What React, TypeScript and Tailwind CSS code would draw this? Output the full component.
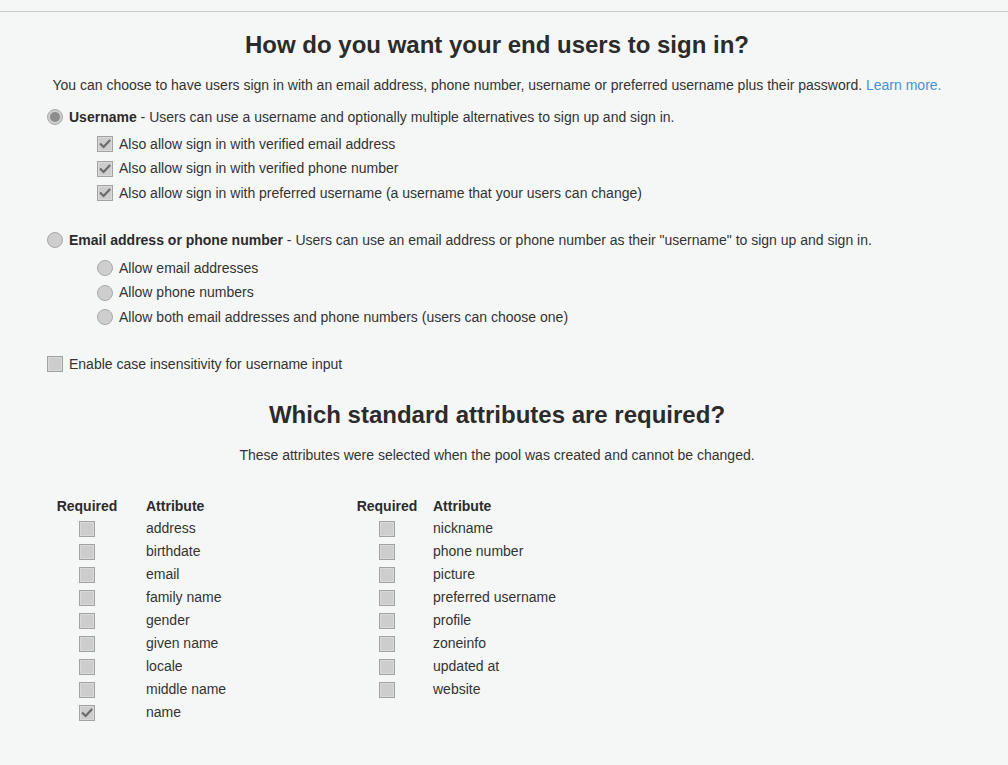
import React from "react";

const Check = () => (
  <svg width="12" height="12" viewBox="0 0 12 12" className="block">
    <path d="M1.8 6.2 L4.6 9 L10.4 2.8" fill="none" stroke="#6b6b6b" strokeWidth="2.2" strokeLinecap="square" />
  </svg>
);

const Box = ({ checked = false }: { checked?: boolean }) => (
  <span className="inline-flex items-center justify-center w-4 h-4 shrink-0 border border-[#a2a2a2] bg-[#cdcdcd] shadow-[inset_0_0_0_1px_#d9d9d9]">
    {checked && <Check />}
  </span>
);

const Radio = ({ checked = false }: { checked?: boolean }) => (
  <span className="inline-flex items-center justify-center w-4 h-4 shrink-0 rounded-full border border-[#a8a8a8] bg-[#cecece]">
    {checked && <span className="block w-[10px] h-[10px] rounded-full bg-[#8d8d8d]" />}
  </span>
);

const left = [
  ["address", false],
  ["birthdate", false],
  ["email", false],
  ["family name", false],
  ["gender", false],
  ["given name", false],
  ["locale", false],
  ["middle name", false],
  ["name", true],
] as const;

const right = [
  "nickname",
  "phone number",
  "picture",
  "preferred username",
  "profile",
  "zoneinfo",
  "updated at",
  "website",
];

export default function App() {
  return (
    <div className="min-h-[765px] bg-[#f5f7f6] text-[#333] font-['Liberation_Sans',Arial,sans-serif] text-[14px]">
      <div className="h-[11px]" />
      <div className="border-t border-[#c8c9c8]" />
      <div className="ml-[32px] w-[930px] px-[15px]">
        <h1 className="mt-[20px] text-center text-[24px] leading-[26px] font-bold text-[#2b2b2b]">
          How do you want your end users to sign in?
        </h1>
        <p className="mt-[17px] text-center leading-[20px]">
          You can choose to have users sign in with an email address, phone number, username or preferred username plus their password.{" "}
          <span className="text-[#4a90d6]">Learn more.</span>
        </p>

        <div className="mt-[10px] flex items-center h-[24px] gap-[6px]">
          <Radio checked />
          <span>
            <b className="text-[#2b2b2b]">Username</b> - Users can use a username and optionally multiple alternatives to sign up and sign in.
          </span>
        </div>
        <div className="mt-[3px] pl-[50px]">
          {[
            "Also allow sign in with verified email address",
            "Also allow sign in with verified phone number",
            "Also allow sign in with preferred username (a username that your users can change)",
          ].map((t) => (
            <div key={t} className="flex items-center h-[24.5px] gap-[6px]">
              <Box checked />
              <span>{t}</span>
            </div>
          ))}
        </div>

        <div className="mt-[22.5px] flex items-center h-[24px] gap-[6px]">
          <Radio />
          <span>
            <b className="text-[#2b2b2b]">Email address or phone number</b> - Users can use an email address or phone number as their "username" to sign up and sign in.
          </span>
        </div>
        <div className="mt-[4px] pl-[50px]">
          {[
            "Allow email addresses",
            "Allow phone numbers",
            "Allow both email addresses and phone numbers (users can choose one)",
          ].map((t) => (
            <div key={t} className="flex items-center h-[24.5px] gap-[6px]">
              <Radio />
              <span>{t}</span>
            </div>
          ))}
        </div>

        <div className="mt-[22.5px] flex items-center h-[24px] gap-[6px]">
          <Box />
          <span>Enable case insensitivity for username input</span>
        </div>

        <h2 className="mt-[26px] text-center text-[24px] leading-[26px] font-bold text-[#2b2b2b]">
          Which standard attributes are required?
        </h2>
        <p className="mt-[17px] text-center leading-[20px]">
          These attributes were selected when the pool was created and cannot be changed.
        </p>

        <div className="mt-[30px] flex">
          <div className="grid grid-cols-[80px_220px]">
            <div className="h-[22px] flex items-center justify-center font-bold text-[#2b2b2b]">Required</div>
            <div className="h-[22px] flex items-center pl-[19px] font-bold text-[#2b2b2b]">Attribute</div>
            {left.map(([n, c]) => (
              <React.Fragment key={n}>
                <div className="h-[23px] flex items-center justify-center">
                  <Box checked={c} />
                </div>
                <div className="h-[23px] flex items-center pl-[19px]">{n}</div>
              </React.Fragment>
            ))}
          </div>
          <div className="grid grid-cols-[80px_auto] content-start">
            <div className="h-[22px] flex items-center justify-center font-bold text-[#2b2b2b]">Required</div>
            <div className="h-[22px] flex items-center pl-[6px] font-bold text-[#2b2b2b]">Attribute</div>
            {right.map((n) => (
              <React.Fragment key={n}>
                <div className="h-[23px] flex items-center justify-center">
                  <Box />
                </div>
                <div className="h-[23px] flex items-center pl-[6px]">{n}</div>
              </React.Fragment>
            ))}
          </div>
        </div>
      </div>
    </div>
  );
}
